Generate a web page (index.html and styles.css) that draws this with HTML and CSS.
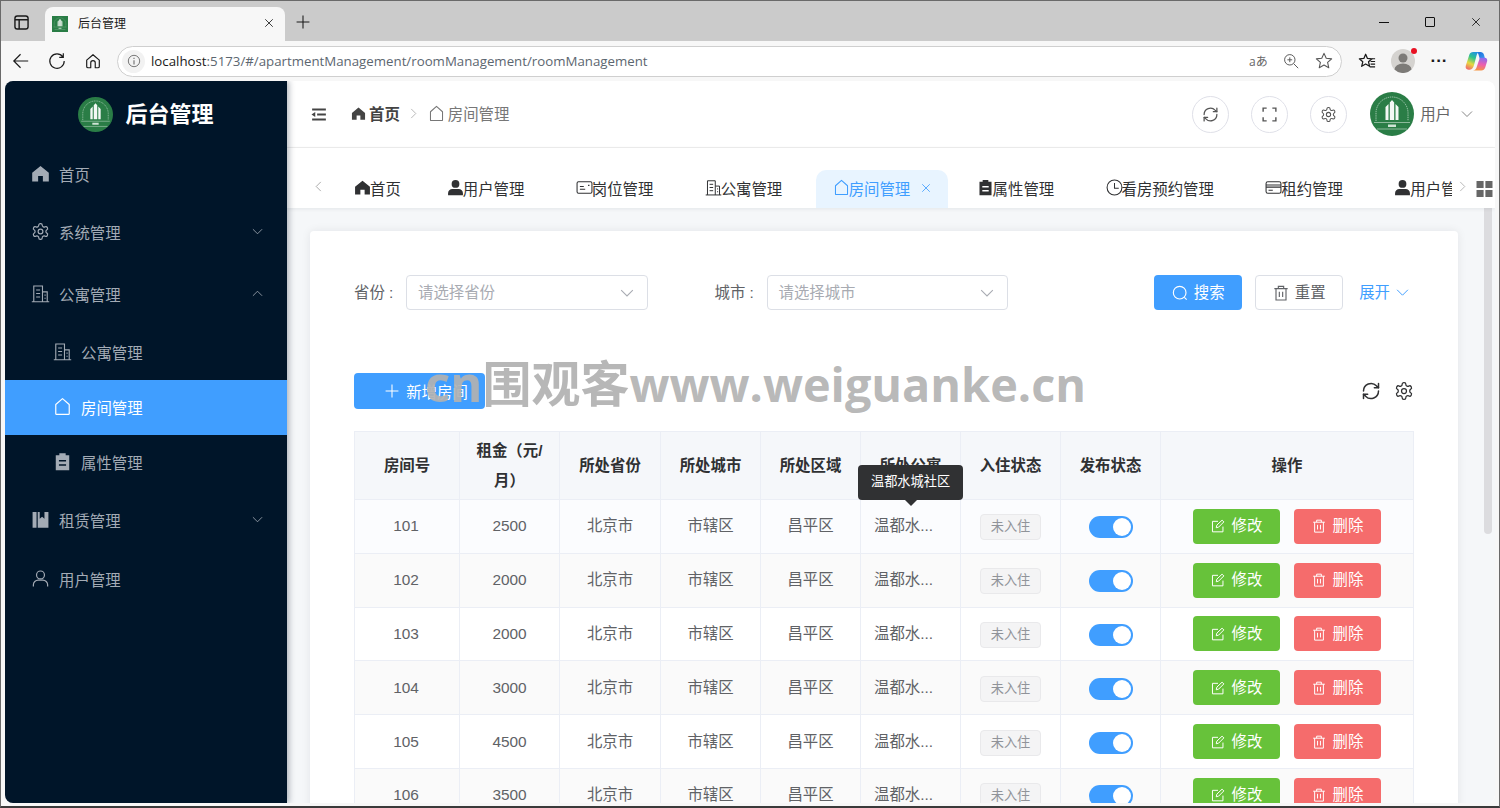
FILE: index.html
```html
<!DOCTYPE html>
<html lang="zh-CN">
<head>
    <meta charset="utf-8" />
    <title>后台管理</title>
    <link rel="stylesheet" href="styles.css">
</head>
<body>

<svg class="sprites" xmlns="http://www.w3.org/2000/svg">
    <symbol id="i-logo" viewBox="0 0 44 44">
        <circle cx="22" cy="22" r="22" fill="#2a7d46"/>
        <path d="M6 29V21a16 16 0 0 1 32 0v8" fill="none" stroke="#cfe3d5" stroke-width=".7" stroke-dasharray="1.4 .8"/>
        <path d="M4 30.500H40M7 37H37" stroke="#cfe3d5" stroke-width=".6"/>
        <path d="M15.500 28V15l3-3V28zM19.800 28V10.500L22 8l2.200 2.500V28zM25.500 28V12l3 3v13z" fill="#f4f8f5"/>
        <path d="M18 32.500h8v2.500h-8z" fill="#cfe3d5"/>
    </symbol>
    <symbol id="i-home" viewBox="0 0 24 24">
        <path d="M12 2.500 1.500 11v11h7.500v-7h6v7h7.500V11z" fill="currentColor"/>
    </symbol>
    <symbol id="i-house" viewBox="0 0 24 24">
        <path d="M12 2 3.500 9.500V21a1 1 0 0 0 1 1h15a1 1 0 0 0 1-1V9.500z" fill="none" stroke="currentColor" stroke-width="1.500" stroke-linejoin="round"/>
    </symbol>
    <symbol id="i-gear" viewBox="0 0 24 24">
        <g fill="none" stroke="currentColor" stroke-width="1.500">
            <path d="M12.220 2h-.44a2 2 0 0 0-2 2v.18a2 2 0 0 1-1 1.730l-.43.25a2 2 0 0 1-2 0l-.15-.08a2 2 0 0 0-2.730.73l-.22.38a2 2 0 0 0 .73 2.730l.15.1a2 2 0 0 1 1 1.720v.51a2 2 0 0 1-1 1.740l-.15.09a2 2 0 0 0-.73 2.730l.22.38a2 2 0 0 0 2.730.73l.15-.08a2 2 0 0 1 2 0l.43.25a2 2 0 0 1 1 1.730V20a2 2 0 0 0 2 2h.44a2 2 0 0 0 2-2v-.18a2 2 0 0 1 1-1.730l.43-.25a2 2 0 0 1 2 0l.15.08a2 2 0 0 0 2.730-.73l.22-.39a2 2 0 0 0-.73-2.730l-.15-.08a2 2 0 0 1-1-1.740v-.5a2 2 0 0 1 1-1.740l.15-.09a2 2 0 0 0 .73-2.730l-.22-.38a2 2 0 0 0-2.730-.73l-.15.08a2 2 0 0 1-2 0l-.43-.25a2 2 0 0 1-1-1.730V4a2 2 0 0 0-2-2z"/>
            <circle cx="12" cy="12" r="3"/>
        </g>
    </symbol>
    <symbol id="i-office" viewBox="0 0 24 24">
        <g fill="none" stroke="currentColor" stroke-width="1.400">
            <path d="M1 22.500H23M3.500 22.500V2.500H14.500V22.500M14.500 10H20.500V22.500"/>
            <path d="M6.500 7.500H11.500M6.500 12H11.500M6.500 16.500H11.500M17 14H18.500M17 18H18.500"/>
        </g>
    </symbol>
    <symbol id="i-clipboard" viewBox="0 0 24 24">
        <path fill="currentColor" fill-rule="evenodd" d="M8 1.500h8V4h4.500v19h-17V4H8zM7.500 10v2h9v-2zM7.500 15.500v2h9v-2z"/>
    </symbol>
    <symbol id="i-book" viewBox="0 0 24 24">
        <path fill="currentColor" d="M2 2.500h5v20H2zM8.500 2.500H11V11l3-2.500 3 2.500V2.500h5v20H8.500z"/>
    </symbol>
    <symbol id="i-user" viewBox="0 0 24 24">
        <g fill="none" stroke="currentColor" stroke-width="1.500">
            <circle cx="12" cy="7.500" r="5"/>
            <path d="M3 22v-2a6 6 0 0 1 6-6h6a6 6 0 0 1 6 6v2"/>
        </g>
    </symbol>
    <symbol id="i-user-fill" viewBox="0 0 24 24">
        <circle cx="12" cy="7" r="5.500" fill="currentColor"/>
        <path d="M1.500 23v-3a6 6 0 0 1 6-6h9a6 6 0 0 1 6 6v3z" fill="currentColor"/>
    </symbol>
    <symbol id="i-post" viewBox="0 0 24 24">
        <g fill="none" stroke="currentColor" stroke-width="1.500">
            <rect x="1.500" y="4" width="21" height="16" rx="2"/>
            <path d="M5.500 10.500H11M5.500 14.500H13"/>
            <path d="M17 9h2" stroke-width="2"/>
        </g>
    </symbol>
    <symbol id="i-clock" viewBox="0 0 24 24">
        <g fill="none" stroke="currentColor" stroke-width="1.500">
            <circle cx="12" cy="12" r="10.500"/>
            <path d="M12 5.500V13H18"/>
        </g>
    </symbol>
    <symbol id="i-card" viewBox="0 0 24 24">
        <g fill="none" stroke="currentColor" stroke-width="1.500">
            <rect x="1.500" y="4" width="21" height="16" rx="2.500"/>
            <path d="M1.500 8.500H22.500M1.500 11.500H22.500M5 16H11"/>
        </g>
    </symbol>
    <symbol id="i-refresh" viewBox="0 0 24 24">
        <g fill="none" stroke="currentColor" stroke-width="1.800" stroke-linecap="round" stroke-linejoin="round">
            <path d="M3 12a9 9 0 0 1 15.500-6.200L21 8"/>
            <path d="M21 3v5h-5"/>
            <path d="M21 12a9 9 0 0 1-15.500 6.200L3 16"/>
            <path d="M3 21v-5h5"/>
        </g>
    </symbol>
    <symbol id="i-full" viewBox="0 0 24 24">
        <path d="M3 8V3H8M16 3H21V8M21 16V21H16M8 21H3V16" fill="none" stroke="currentColor" stroke-width="2"/>
    </symbol>
    <symbol id="i-fold" viewBox="0 0 24 24">
        <path d="M1 4H23M9 12H23M1 20H23" fill="none" stroke="currentColor" stroke-width="3"/>
        <path d="M0 12 6 8V16z" fill="currentColor"/>
    </symbol>
    <symbol id="i-down" viewBox="0 0 24 24">
        <path d="M2 7 12 17 22 7" fill="none" stroke="currentColor" stroke-width="1.800"/>
    </symbol>
    <symbol id="i-up" viewBox="0 0 24 24">
        <path d="M2 17 12 7 22 17" fill="none" stroke="currentColor" stroke-width="1.800"/>
    </symbol>
    <symbol id="i-left" viewBox="0 0 24 24">
        <path d="M17 2 7 12 17 22" fill="none" stroke="currentColor" stroke-width="1.800"/>
    </symbol>
    <symbol id="i-right" viewBox="0 0 24 24">
        <path d="M7 2 17 12 7 22" fill="none" stroke="currentColor" stroke-width="1.800"/>
    </symbol>
    <symbol id="i-close" viewBox="0 0 24 24">
        <path d="M3 3 21 21M21 3 3 21" fill="none" stroke="currentColor" stroke-width="2"/>
    </symbol>
    <symbol id="i-search" viewBox="0 0 24 24">
        <g fill="none" stroke="currentColor" stroke-width="1.700">
            <circle cx="11.500" cy="11.500" r="9.500"/>
            <path d="M18.500 18.500 22 22"/>
        </g>
    </symbol>
    <symbol id="i-trash" viewBox="0 0 24 24">
        <g fill="none" stroke="currentColor" stroke-width="1.700">
            <path d="M2 5.500H22M8 5.500V2H16V5.500M4.500 5.500V22.500H19.500V5.500M9.500 10V18M14.500 10V18"/>
        </g>
    </symbol>
    <symbol id="i-edit" viewBox="0 0 24 24">
        <g fill="none" stroke="currentColor" stroke-width="1.700">
            <path d="M20.500 13V22H2.500V4H12"/>
            <path d="M9 15 10 10.500 19 2 22 5 13 14z"/>
        </g>
    </symbol>
    <symbol id="i-plus" viewBox="0 0 24 24">
        <path d="M12 1V23M1 12H23" fill="none" stroke="currentColor" stroke-width="1.800"/>
    </symbol>
    <symbol id="i-grid" viewBox="0 0 18 18">
        <path fill="currentColor" d="M0 0h8v8H0zM10 0h8v8h-8zM0 10h8v8H0zM10 10h8v8h-8z"/>
    </symbol>
    <symbol id="i-back" viewBox="0 0 20 20">
        <path d="M18 10H2M9.500 2.500 2 10l7.500 7.500" fill="none" stroke="currentColor" stroke-width="1.300"/>
    </symbol>
    <symbol id="i-reload" viewBox="0 0 20 20">
        <path d="M16.500 5.500A8 8 0 1 0 18 10M17 1.500V6h-4.500" fill="none" stroke="currentColor" stroke-width="1.300"/>
    </symbol>
    <symbol id="i-tabs" viewBox="0 0 16 16">
        <g fill="none" stroke="currentColor" stroke-width="1.500">
            <rect x="1" y="1" width="14" height="14" rx="2.500"/>
            <path d="M1 5H15M5.500 5V15"/>
        </g>
    </symbol>
    <symbol id="i-home-line" viewBox="0 0 20 20">
        <path d="M10 3 3 9v7a1.500 1.500 0 0 0 1.500 1.500H7.500V12a2.500 2.500 0 0 1 5 0v5.500h3A1.500 1.500 0 0 0 17 16V9z" fill="none" stroke="currentColor" stroke-width="1.300" stroke-linejoin="round"/>
    </symbol>
    <symbol id="i-info" viewBox="0 0 16 16">
        <circle cx="8" cy="8" r="6.500" fill="none" stroke="currentColor" stroke-width="1"/>
        <path d="M8 7v5M8 4.200v1.400" stroke="currentColor" stroke-width="1.200"/>
    </symbol>
    <symbol id="i-zoom" viewBox="0 0 20 20">
        <g fill="none" stroke="currentColor" stroke-width="1.200">
            <circle cx="8.500" cy="8.500" r="6.500"/>
            <path d="M13.500 13.500 19 19M8.500 5.500v6M5.500 8.500h6"/>
        </g>
    </symbol>
    <symbol id="i-star" viewBox="0 0 20 20">
        <path d="M10 1.500l2.500 5.500 6 .6-4.500 4 1.300 5.900L10 14.500 4.700 17.500 6 11.600l-4.500-4 6-.6z" fill="none" stroke="currentColor" stroke-width="1.200" stroke-linejoin="round"/>
    </symbol>
    <symbol id="i-favs" viewBox="0 0 20 20">
        <path d="M8.500 2.500 10.500 7.200l5 .4-3.800 3.300 1.200 5L8.500 13.300 4.100 15.900l1.200-5L1.500 7.600l5-.4z" fill="none" stroke="currentColor" stroke-width="1.400" stroke-linejoin="round"/>
        <path d="M14 10.500H19M14 13.500H19M13 16.500H19M15.500 7.500H19" stroke="currentColor" stroke-width="1.200"/>
    </symbol>
</svg>

<div class="chrome-tabs">
    <svg class="ci ci-tabs"><use href="#i-tabs"/></svg>
    <div class="chrome-tab">
        <svg class="favicon"><use href="#i-logo"/></svg>
        <span class="chrome-tab-title">后台管理</span>
        <svg class="chrome-tab-x"><use href="#i-close"/></svg>
    </div>
    <svg class="chrome-plus"><use href="#i-plus"/></svg>
    <div class="win-controls">
        <span class="win-min"></span>
        <span class="win-max"></span>
        <svg class="win-x"><use href="#i-close"/></svg>
    </div>
</div>

<div class="chrome-bar">
    <svg class="ci ci-nav"><use href="#i-back"/></svg>
    <svg class="ci ci-nav"><use href="#i-reload"/></svg>
    <svg class="ci ci-nav"><use href="#i-home-line"/></svg>
    <div class="address">
        <span class="addr-info"><svg class="ci-info"><use href="#i-info"/></svg></span>
        <span class="addr-url"><b>localhost</b>:5173/#/apartmentManagement/roomManagement/roomManagement</span>
        <span class="addr-read">aあ</span>
        <svg class="ci ci-addr"><use href="#i-zoom"/></svg>
        <svg class="ci ci-addr"><use href="#i-star"/></svg>
    </div>
    <svg class="ci ci-favs"><use href="#i-favs"/></svg>
    <div class="profile">
        <svg viewBox="0 0 24 24" class="profile-pic">
            <circle cx="12" cy="12" r="12" fill="#d5d3d0"/>
            <circle cx="12" cy="9" r="4.500" fill="#7d7b78"/>
            <path d="M3.500 20.500a8.500 6 0 0 1 17 0 12 12 0 0 1-17 0z" fill="#7d7b78"/>
        </svg>
        <span class="profile-dot"></span>
    </div>
    <span class="dots">···</span>
    <svg class="copilot" viewBox="0 0 24 24">
        <defs>
            <linearGradient id="cp1" x1=".7" y1="0" x2=".3" y2="1">
                <stop offset="0" stop-color="#1f8fe6"/><stop offset=".35" stop-color="#2fc48d"/><stop offset=".7" stop-color="#e8d93f"/><stop offset="1" stop-color="#f0736a"/>
            </linearGradient>
            <linearGradient id="cp2" x1=".6" y1="0" x2=".4" y2="1">
                <stop offset="0" stop-color="#8a6cf0"/><stop offset=".5" stop-color="#ec5fb0"/><stop offset="1" stop-color="#f7953f"/>
            </linearGradient>
            <linearGradient id="cp3" x1="0" y1="0" x2="1" y2="1">
                <stop offset="0" stop-color="#1668d8"/><stop offset="1" stop-color="#3c9cf0"/>
            </linearGradient>
        </defs>
        <path d="M12.500 2h3.500c2 0 3.200 1 3.800 3l1.200 4.500h-5.500L14 4.500c-.4-1.500-.8-2.500-1.500-2.500z" fill="url(#cp3)"/>
        <path d="M15.500 8h5c2 0 3.200 1.800 2.600 3.800l-2 6.500c-.7 2-2 3.200-4 3.200H8c2.500 0 3.600-1.800 4.300-4z" fill="url(#cp2)"/>
        <path d="M8.500 2h7.500c-2 0-3.200 1.200-3.800 3.200L9.500 15.500c-.8 2.800-2 5-4.500 5H3.500c-2.200 0-3.300-2-2.700-4L4.500 5c.7-2 2-3 4-3z" fill="url(#cp1)"/>
    </svg>
</div>

<div class="app">
    <aside class="sidebar">
        <div class="side-head">
            <svg class="side-logo"><use href="#i-logo"/></svg>
            <span class="side-title">后台管理</span>
        </div>
        <nav class="menu">
            <a class="menu-item"><svg class="menu-ico"><use href="#i-home"/></svg>首页</a>
            <a class="menu-item mt3"><svg class="menu-ico"><use href="#i-gear"/></svg>系统管理<svg class="menu-arrow"><use href="#i-down"/></svg></a>
            <a class="menu-item mt7"><svg class="menu-ico"><use href="#i-office"/></svg>公寓管理<svg class="menu-arrow"><use href="#i-up"/></svg></a>
            <a class="menu-item menu-sub mt3"><svg class="menu-ico"><use href="#i-office"/></svg>公寓管理</a>
            <a class="menu-item menu-sub active"><svg class="menu-ico"><use href="#i-house"/></svg>房间管理</a>
            <a class="menu-item menu-sub"><svg class="menu-ico"><use href="#i-clipboard"/></svg>属性管理</a>
            <a class="menu-item mt3"><svg class="menu-ico"><use href="#i-book"/></svg>租赁管理<svg class="menu-arrow"><use href="#i-down"/></svg></a>
            <a class="menu-item mt4"><svg class="menu-ico"><use href="#i-user"/></svg>用户管理</a>
        </nav>
    </aside>

    <main class="main">
        <header class="topbar">
            <svg class="fold"><use href="#i-fold"/></svg>
            <div class="crumbs">
                <svg class="crumb-ico"><use href="#i-home"/></svg>
                <span class="crumb-first">首页</span>
                <svg class="crumb-sep"><use href="#i-right"/></svg>
                <svg class="crumb-ico crumb-light"><use href="#i-house"/></svg>
                <span class="crumb-last">房间管理</span>
            </div>
            <div class="top-right">
                <span class="round-btn"><svg><use href="#i-refresh"/></svg></span>
                <span class="round-btn"><svg><use href="#i-full"/></svg></span>
                <span class="round-btn round-last"><svg><use href="#i-gear"/></svg></span>
                <svg class="avatar"><use href="#i-logo"/></svg>
                <span class="user-name">用户</span>
                <svg class="user-arrow"><use href="#i-down"/></svg>
            </div>
        </header>

        <div class="tabs">
            <svg class="tabs-left"><use href="#i-left"/></svg>
            <div class="tab-list">
                <a class="tab tab-first"><svg><use href="#i-home"/></svg>首页</a>
                <a class="tab"><svg><use href="#i-user-fill"/></svg>用户管理</a>
                <a class="tab"><svg><use href="#i-post"/></svg>岗位管理</a>
                <a class="tab"><svg><use href="#i-office"/></svg>公寓管理</a>
                <a class="tab tab-active"><svg><use href="#i-house"/></svg>房间管理<svg class="tab-x"><use href="#i-close"/></svg></a>
                <a class="tab"><svg><use href="#i-clipboard"/></svg>属性管理</a>
                <a class="tab"><svg><use href="#i-clock"/></svg>看房预约管理</a>
                <a class="tab"><svg><use href="#i-card"/></svg>租约管理</a>
                <a class="tab"><svg><use href="#i-user-fill"/></svg>用户管理</a>
            </div>
            <svg class="tabs-right"><use href="#i-right"/></svg>
            <svg class="tabs-grid"><use href="#i-grid"/></svg>
        </div>

        <div class="content">
            <section class="card">
                <form class="filter">
                    <label class="f-label">省份 :</label>
                    <div class="select"><span>请选择省份</span><svg><use href="#i-down"/></svg></div>
                    <label class="f-label f-label-2">城市 :</label>
                    <div class="select"><span>请选择城市</span><svg><use href="#i-down"/></svg></div>
                    <div class="filter-btns">
                        <a class="btn btn-blue"><svg><use href="#i-search"/></svg><span>搜索</span></a>
                        <a class="btn btn-plain"><svg><use href="#i-trash"/></svg><span>重置</span></a>
                        <a class="expand"><span>展开</span><svg><use href="#i-down"/></svg></a>
                    </div>
                </form>

                <div class="toolbar">
                    <a class="btn btn-blue btn-add"><svg><use href="#i-plus"/></svg>新增房间</a>
                    <div class="tool-icons">
                        <svg><use href="#i-refresh"/></svg>
                        <svg><use href="#i-gear"/></svg>
                    </div>
                </div>

                <table class="grid">
                    <colgroup>
                        <col class="c1"><col class="c2"><col class="c3a"><col class="c3"><col class="c3"><col class="c3"><col class="c3"><col class="c3"><col class="c9">
                    </colgroup>
                    <thead>
                        <tr>
                            <th>房间号</th><th>租金（元/月）</th><th>所处省份</th><th>所处城市</th><th>所处区域</th><th>所处公寓</th><th>入住状态</th><th>发布状态</th><th>操作</th>
                        </tr>
                    </thead>
                    <tbody>
                        <tr class="row-hover">
                            <td>101</td><td>2500</td><td>北京市</td><td>市辖区</td><td>昌平区</td><td class="left">温都水...</td>
                            <td><span class="tag">未入住</span></td><td><span class="switch"></span></td>
                            <td><div class="ops"><a class="btn btn-green"><svg><use href="#i-edit"/></svg>修改</a><a class="btn btn-red"><svg><use href="#i-trash"/></svg>删除</a></div></td>
                        </tr>
                        <tr class="row-alt">
                            <td>102</td><td>2000</td><td>北京市</td><td>市辖区</td><td>昌平区</td><td class="left">温都水...</td>
                            <td><span class="tag">未入住</span></td><td><span class="switch"></span></td>
                            <td><div class="ops"><a class="btn btn-green"><svg><use href="#i-edit"/></svg>修改</a><a class="btn btn-red"><svg><use href="#i-trash"/></svg>删除</a></div></td>
                        </tr>
                        <tr>
                            <td>103</td><td>2000</td><td>北京市</td><td>市辖区</td><td>昌平区</td><td class="left">温都水...</td>
                            <td><span class="tag">未入住</span></td><td><span class="switch"></span></td>
                            <td><div class="ops"><a class="btn btn-green"><svg><use href="#i-edit"/></svg>修改</a><a class="btn btn-red"><svg><use href="#i-trash"/></svg>删除</a></div></td>
                        </tr>
                        <tr class="row-alt">
                            <td>104</td><td>3000</td><td>北京市</td><td>市辖区</td><td>昌平区</td><td class="left">温都水...</td>
                            <td><span class="tag">未入住</span></td><td><span class="switch"></span></td>
                            <td><div class="ops"><a class="btn btn-green"><svg><use href="#i-edit"/></svg>修改</a><a class="btn btn-red"><svg><use href="#i-trash"/></svg>删除</a></div></td>
                        </tr>
                        <tr>
                            <td>105</td><td>4500</td><td>北京市</td><td>市辖区</td><td>昌平区</td><td class="left">温都水...</td>
                            <td><span class="tag">未入住</span></td><td><span class="switch"></span></td>
                            <td><div class="ops"><a class="btn btn-green"><svg><use href="#i-edit"/></svg>修改</a><a class="btn btn-red"><svg><use href="#i-trash"/></svg>删除</a></div></td>
                        </tr>
                        <tr class="row-alt">
                            <td>106</td><td>3500</td><td>北京市</td><td>市辖区</td><td>昌平区</td><td class="left">温都水...</td>
                            <td><span class="tag">未入住</span></td><td><span class="switch"></span></td>
                            <td><div class="ops"><a class="btn btn-green"><svg><use href="#i-edit"/></svg>修改</a><a class="btn btn-red"><svg><use href="#i-trash"/></svg>删除</a></div></td>
                        </tr>
                    </tbody>
                </table>
            </section>
            <div class="scrollbar"></div>
        </div>
    </main>
</div>

<div class="tooltip">温都水城社区</div>
<div class="watermark"><span class="wm-cjk">cn围观客</span><span class="wm-en">www.weiguanke.cn</span></div>

</body>
</html>
```

FILE: styles.css
```css
* {
    box-sizing: border-box;
}

html, body {
    margin: 0;
    height: 808px;
    overflow: hidden;
}

body {
    position: relative;
    display: flex;
    flex-direction: column;
    background: #f7f7f7;
    border-left: 1px solid #6a6a6a;
    border-right: 1px solid #6a6a6a;
    border-top: 1px solid #6a6a6a;
    border-bottom: 2px solid #3a3a3a;
    font-family: "Liberation Sans", "Noto Sans CJK SC", sans-serif;
    font-size: 15.4px;
    color: #606266;
}

a {
    color: inherit;
    text-decoration: none;
}

svg {
    display: block;
    flex: none;
}

.sprites {
    position: absolute;
    width: 0;
    height: 0;
}

/* browser window */

.chrome-tabs {
    display: flex;
    align-items: flex-end;
    height: 40px;
    flex: none;
    background: #cbcbcb;
    color: #1a1a1a;
}

.ci-tabs {
    width: 15px;
    height: 15px;
    margin: 0 15px 11px 13px;
}

.chrome-tab {
    display: flex;
    align-items: center;
    width: 240px;
    height: 34px;
    margin-left: 1px;
    padding: 0 9px 4px 7px;
    background: #f7f7f7;
    border-radius: 8px 8px 0 0;
}

.favicon {
    width: 16px;
    height: 16px;
    margin: 3px 10px 0 0;
    background: #2a7d46;
}

.chrome-tab-title {
    flex: 1;
    font-size: 12px;
}

.chrome-tab-x {
    width: 10px;
    height: 10px;
    margin: 2px 2px 0 0;
}

.chrome-plus {
    width: 14px;
    height: 14px;
    margin: 0 0 12px 11px;
}

.win-controls {
    display: flex;
    align-items: center;
    gap: 36px;
    margin: 0 18px 14px auto;
}

.win-min {
    width: 10px;
    height: 1px;
    background: #111;
}

.win-max {
    width: 10px;
    height: 10px;
    border: 1px solid #111;
    border-radius: 1px;
}

.win-x {
    width: 10px;
    height: 10px;
    color: #111;
}

.chrome-bar {
    display: flex;
    align-items: center;
    height: 40px;
    flex: none;
    color: #1a1a1a;
}

.ci-nav {
    width: 18px;
    height: 18px;
    margin-left: 18px;
}

.ci-nav:first-child {
    margin-left: 11px;
}

.address {
    display: flex;
    align-items: center;
    width: 1225px;
    height: 31px;
    margin-left: 15px;
    padding: 0 8px 0 4px;
    background: #fff;
    border: 1px solid #cfcfcf;
    border-radius: 16px;
    font-family: "Open Sans", "Noto Sans CJK JP", sans-serif;
    font-size: 13.270px;
    color: #5c6670;
}

.addr-info {
    display: flex;
    align-items: center;
    justify-content: center;
    width: 23px;
    height: 23px;
    margin-right: 6px;
    border-radius: 50%;
    background: #f2f2f2;
    color: #666;
}

.ci-info {
    width: 14px;
    height: 14px;
}

.addr-url {
    flex: 1;
}

.addr-url b {
    font-weight: 400;
    color: #1a1a1a;
}

.addr-read {
    width: 20px;
    margin-right: 14px;
    font-size: 12px;
    color: #666;
    white-space: nowrap;
}

.ci-addr {
    width: 16px;
    height: 16px;
    margin-right: 16px;
    color: #555;
}

.ci-addr:last-child {
    width: 18px;
    height: 18px;
    margin-right: 0;
}

.ci-favs {
    width: 18px;
    height: 18px;
    margin-left: 16px;
}

.profile {
    position: relative;
    width: 24px;
    height: 24px;
    margin-left: 15px;
}

.profile-pic {
    width: 24px;
    height: 24px;
}

.profile-dot {
    position: absolute;
    top: -1px;
    right: -2px;
    width: 6px;
    height: 6px;
    border-radius: 50%;
    background: #e81123;
}

.dots {
    width: 20px;
    margin-left: 14px;
    font-size: 17px;
    font-weight: 700;
    text-align: center;
}

.copilot {
    width: 23px;
    height: 23px;
    margin-left: 16px;
}

/* app */

.app {
    display: flex;
    flex: 1;
    min-height: 0;
    margin: 0 4px 3px 4px;
    overflow: hidden;
    border-radius: 8px 8px 8px 8px;
}

.sidebar {
    position: relative;
    z-index: 2;
    width: 282px;
    flex: none;
    background: #001529;
    color: #a3abb5;
    box-shadow: 2px 0 6px rgba(0, 21, 41, .3);
}

.side-head {
    display: flex;
    align-items: center;
    justify-content: center;
    gap: 12px;
    height: 66px;
}

.side-logo {
    width: 35px;
    height: 35px;
}

.side-title {
    padding-bottom: 4px;
    font-size: 22px;
    font-weight: 700;
    color: #fff;
}

.menu-item {
    display: flex;
    align-items: center;
    height: 55px;
    padding: 0 24px 2px 26px;
}

.mt3 {
    margin-top: 3px;
}

.mt4 {
    margin-top: 4px;
}

.mt7 {
    margin-top: 7px;
}

.menu-ico {
    width: 19px;
    height: 19px;
    margin-right: 9px;
}

.menu-arrow {
    width: 11px;
    height: 11px;
    margin-left: auto;
}

.menu-sub {
    padding-left: 48px;
}

.menu-sub.active {
    background: #409eff;
    color: #fff;
}

.main {
    display: flex;
    flex-direction: column;
    flex: 1;
    min-width: 0;
    background: #fff;
}

.topbar {
    display: flex;
    align-items: center;
    height: 67px;
    flex: none;
    padding: 0 22px 0 24px;
    border-bottom: 1px solid #eee;
}

.fold {
    width: 16px;
    height: 15px;
    color: #444;
    margin-right: 24px;
}

.crumbs {
    display: flex;
    align-items: center;
    padding-bottom: 2px;
    color: #777;
}

.crumb-ico {
    width: 15px;
    height: 15px;
    margin-right: 3px;
    color: #444;
}

.crumb-light {
    width: 17px;
    height: 17px;
    color: #777;
}

.crumb-first {
    font-weight: 700;
    color: #444;
}

.crumb-sep {
    width: 11px;
    height: 11px;
    margin: 0 9px 0 8px;
    color: #aaa;
}

.top-right {
    display: flex;
    align-items: center;
    margin-left: auto;
}

.round-btn {
    display: flex;
    align-items: center;
    justify-content: center;
    width: 37px;
    height: 37px;
    margin-right: 22px;
    border: 1px solid #dfe0e8;
    border-radius: 50%;
    color: #555;
}

.round-last {
    margin-right: 23px;
}

.round-btn svg {
    width: 17px;
    height: 17px;
}

.avatar {
    width: 44px;
    height: 44px;
}

.user-name {
    margin-left: 6px;
    padding-bottom: 2px;
    color: #666;
}

.user-arrow {
    width: 12px;
    height: 12px;
    margin-left: 10px;
    color: #777;
}

.tabs {
    display: flex;
    align-items: center;
    height: 60px;
    flex: none;
    position: relative;
    z-index: 1;
    box-shadow: 0 1px 4px rgba(0, 21, 41, .08);
    background: #fff;
}

.tabs-left {
    width: 11px;
    height: 11px;
    margin: 16px 6px 0 26px;
    color: #999;
}

.tab-list {
    display: flex;
    flex: 1;
    align-self: flex-end;
    height: 38px;
    min-width: 0;
    overflow: hidden;
    padding-left: 7px;
}

.tab {
    display: flex;
    align-items: center;
    flex: none;
    height: 38px;
    padding: 0 26.200px 3px;
    color: #303133;
    white-space: nowrap;
}

.tab svg {
    width: 17px;
    height: 17px;
    margin: 0 -1px;
}

.tab-first {
    padding-left: 18px;
    padding-right: 20.800px;
}

.tab-active {
    position: relative;
    margin: 0 3.800px 0 7.200px;
    padding: 0 16.400px 3px 18px;
    background: #e8f4ff;
    border-radius: 10px 10px 0 0;
    color: #409eff;
}

.tab .tab-x {
    width: 10px;
    height: 10px;
    margin: 0 0 0 11px;
}

.tabs-right {
    width: 11px;
    height: 11px;
    margin: 16px 8px 0 5px;
    color: #aaa;
}

.tabs-grid {
    width: 17px;
    height: 16px;
    margin: 22px 2px 0 0;
    color: #666;
}

.content {
    position: relative;
    flex: 1;
    min-height: 0;
    padding: 23px 37px 0 23px;
    overflow: hidden;
    background: #f5f7f9;
}

.scrollbar {
    position: absolute;
    top: 0;
    right: 3px;
    width: 8px;
    height: 326px;
    background: #dcdcdf;
    border-radius: 0 0 4px 4px;
}

.card {
    height: 700px;
    padding: 44px;
    background: #fff;
    border-radius: 4px;
    box-shadow: 0 0 10px rgba(0, 21, 41, .08);
}

.filter {
    display: flex;
    align-items: center;
    height: 35px;
}

.f-label {
    width: 52px;
    padding-bottom: 3px;
    white-space: nowrap;
}

.f-label-2 {
    margin-left: 67px;
}

.select {
    display: flex;
    align-items: center;
    justify-content: space-between;
    width: 241.500px;
    height: 35px;
    padding: 0 13px 0 11px;
    border: 1px solid #dcdfe6;
    border-radius: 4px;
    color: #a8abb2;
}

.select span,
.filter-btns span {
    padding-bottom: 3px;
}

.select svg {
    width: 14px;
    height: 14px;
    color: #a8abb2;
}

.filter-btns {
    display: flex;
    align-items: center;
    margin-left: auto;
}

.btn {
    display: flex;
    align-items: center;
    justify-content: center;
    gap: 7px;
    width: 88px;
    height: 35px;
    border-radius: 4px;
}

.btn svg {
    width: 14px;
    height: 14px;
}

.filter-btns .btn {
    gap: 6px;
}

.filter-btns .btn svg {
    width: 16px;
    height: 16px;
}

.btn-blue {
    background: #409eff;
    color: #fff;
}

.btn-plain {
    margin-left: 13px;
    border: 1px solid #dcdfe6;
    color: #606266;
}

.expand {
    display: flex;
    align-items: center;
    margin-left: 16px;
    margin-right: 5px;
    color: #409eff;
}

.expand svg {
    width: 13px;
    height: 13px;
    margin-left: 6px;
}

.toolbar {
    display: flex;
    align-items: center;
    justify-content: space-between;
    height: 36px;
    margin-top: 63px;
}

.btn-add {
    width: 131px;
    height: 36px;
    padding: 0 0 1px 14px;
}

.tool-icons {
    display: flex;
    gap: 13px;
    color: #303133;
}

.tool-icons svg {
    width: 20px;
    height: 20px;
}

.grid {
    width: 1059px;
    margin-top: 22px;
    border-collapse: collapse;
    table-layout: fixed;
}

.c1 {
    width: 105px;
}

.c2 {
    width: 100px;
}

.c3a {
    width: 101px;
}

.c3 {
    width: 100px;
}

.c9 {
    width: 253px;
}

.grid th,
.grid td {
    padding: 0 12px;
    border: 1px solid #ebeef5;
    text-align: center;
    line-height: 30px;
}

.grid th {
    height: 68px;
    background: #f5f7fa;
    color: #303133;
    font-weight: 700;
}

.grid td {
    height: 53.800px;
    padding: 0 8px;
}

.grid td:first-child {
    padding-right: 10px;
}

.grid td.left {
    text-align: left;
    padding-left: 13px;
}

.row-hover td {
    background: #fbfcfe;
}

.row-alt td {
    background: #fafafa;
}

.tag {
    display: inline-flex;
    align-items: center;
    justify-content: center;
    width: 61px;
    height: 26px;
    border: 1px solid #e9e9eb;
    border-radius: 4px;
    background: #f4f4f5;
    color: #909399;
    font-size: 13.200px;
    vertical-align: middle;
}

.switch {
    display: inline-block;
    position: relative;
    width: 44px;
    height: 22px;
    border-radius: 11px;
    background: #409eff;
    vertical-align: middle;
}

.switch::after {
    content: "";
    position: absolute;
    top: 2px;
    right: 2px;
    width: 18px;
    height: 18px;
    border-radius: 50%;
    background: #fff;
}

.ops {
    display: flex;
    justify-content: center;
    gap: 14px;
}

.ops .btn {
    width: 87px;
}

.btn-green {
    background: #67c23a;
    color: #fff;
}

.btn-red {
    background: #f56c6c;
    color: #fff;
}

/* hover tooltip on the apartment cell */

.tooltip {
    position: absolute;
    left: 857px;
    top: 464px;
    padding: 0 13px;
    height: 35px;
    line-height: 34px;
    background: #303133;
    border-radius: 4px;
    color: #fff;
    font-size: 13.200px;
    z-index: 5;
}

.tooltip::after {
    content: "";
    position: absolute;
    left: 50%;
    bottom: -6px;
    margin-left: -6px;
    border-style: solid;
    border-width: 6px 6px 0 6px;
    border-color: #303133 transparent transparent transparent;
}

/* watermark on the screenshot */

.watermark {
    position: absolute;
    left: 424px;
    top: 350px;
    z-index: 6;
    font-family: "Open Sans", "Noto Sans CJK SC", sans-serif;
    font-weight: 700;
    line-height: 64px;
    color: rgba(178, 178, 178, .93);
    white-space: nowrap;
}

.wm-cjk {
    font-size: 49px;
}

.wm-en {
    font-size: 46.800px;
}
```
